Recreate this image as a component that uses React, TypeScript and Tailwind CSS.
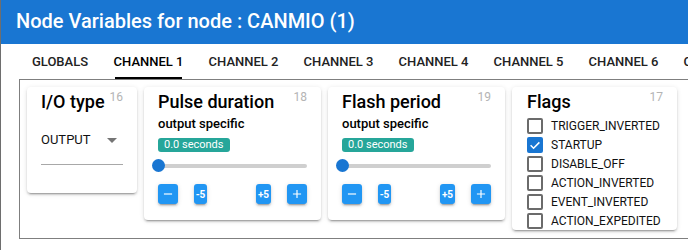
import React from "react";

const tabs = [
  "GLOBALS",
  "CHANNEL 1",
  "CHANNEL 2",
  "CHANNEL 3",
  "CHANNEL 4",
  "CHANNEL 5",
  "CHANNEL 6",
  "CHANNEL 7",
];

const flags = [
  { label: "TRIGGER_INVERTED", checked: false },
  { label: "STARTUP", checked: true },
  { label: "DISABLE_OFF", checked: false },
  { label: "ACTION_INVERTED", checked: false },
  { label: "EVENT_INVERTED", checked: false },
  { label: "ACTION_EXPEDITED", checked: false },
];

const paper =
  "relative bg-white rounded-[4px] shadow-[0_3px_1px_-2px_rgba(0,0,0,0.2),0_2px_2px_0_rgba(0,0,0,0.14),0_1px_5px_0_rgba(0,0,0,0.12)]";

const btn =
  "h-[20px] flex items-center justify-center rounded-[3px] bg-[#2196f3] text-white shadow-[0_3px_1px_-2px_rgba(0,0,0,0.2),0_2px_2px_0_rgba(0,0,0,0.14),0_1px_5px_0_rgba(0,0,0,0.12)]";

function NvIndex({ n }: { n: number }) {
  return (
    <span className="absolute right-[14px] top-[4px] text-[12px] leading-none text-[#b4b4b4]">
      {n}
    </span>
  );
}

function Title({ children }: { children: React.ReactNode }) {
  return (
    <div className="pt-[3px] text-[18px] leading-[24px] font-medium text-black">
      {children}
    </div>
  );
}

function SliderCard({ title, index }: { title: string; index: number }) {
  return (
    <div className={`${paper} w-[177px] px-[14px] pb-[16px]`}>
      <NvIndex n={index} />
      <Title>{title}</Title>
      <div className="text-[13px] leading-[20px] font-medium text-black">
        output specific
      </div>
      <div className="mt-[4px] flex">
        <span className="h-[14px] px-[6px] rounded-[3px] bg-[#26a69a] text-white text-[11px] leading-[14px]">
          0.0 seconds
        </span>
      </div>
      {/* slider */}
      <div className="relative mt-[7px] h-[13px] flex items-center">
        <div className="h-[4px] w-full rounded-full bg-[#cfcfcf]" />
        <div className="absolute left-[-6px] top-0 size-[13px] rounded-full bg-[#1976d2]" />
      </div>
      <div className="mt-[12px] flex justify-between">
        <div className="flex gap-[16px]">
          <button className={`${btn} w-[20px]`}>
            <svg width="14" height="14" viewBox="0 0 24 24" fill="white">
              <path d="M19 13H5v-2h14v2z" />
            </svg>
          </button>
          <button className={`${btn} w-[13px] text-[10px] font-bold`}>-5</button>
        </div>
        <div className="flex gap-[16px]">
          <button className={`${btn} w-[15px] text-[10px] font-bold`}>+5</button>
          <button className={`${btn} w-[20px]`}>
            <svg width="14" height="14" viewBox="0 0 24 24" fill="white">
              <path d="M19 13h-6v6h-2v-6H5v-2h6V5h2v6h6v2z" />
            </svg>
          </button>
        </div>
      </div>
    </div>
  );
}

export default function App() {
  return (
    <div
      className="w-[688px] h-[250px] overflow-hidden flex bg-white"
      style={{ fontFamily: "Roboto, 'Liberation Sans', sans-serif" }}
    >
      <div className="w-px shrink-0 bg-[#6e6e6e]" />
      <div className="flex-1 min-w-0 flex flex-col">
        {/* header */}
        <div className="h-[44px] shrink-0 bg-[#1976d2] px-[15px] pb-[2px] flex items-center">
          <h2 className="text-[20px] leading-[28px] font-medium text-white whitespace-nowrap">
            Node Variables for node : CANMIO (1)
          </h2>
        </div>

        {/* tabs */}
        <div className="h-[35px] shrink-0 pl-[18px] flex whitespace-nowrap">
          {tabs.map((t, i) => (
            <div
              key={t}
              className={`relative shrink-0 h-full flex items-center justify-center text-[13px] font-medium ${
                i === 0 ? "w-[82px]" : "w-[95px]"
              } ${i === 1 ? "text-black" : "text-[#222]"}`}
            >
              {t}
              {i === 1 && (
                <span className="absolute bottom-0 left-[14px] right-[14px] h-[2px] bg-black" />
              )}
            </div>
          ))}
        </div>

        {/* panel */}
        <div className="ml-[18px] w-[700px] h-[160px] shrink-0 border border-[#7f7f7f] p-[7px] flex items-start gap-[7px]">
          {/* I/O type */}
          <div className={`${paper} w-[110px] px-[14px] pb-[28px]`}>
            <NvIndex n={16} />
            <Title>I/O type</Title>
            <div className="mt-[14px] w-[82px] border-b border-[#a8a8a8] pb-[12px]">
              <div className="h-[24px] flex items-center justify-between pr-[6px]">
                <span className="text-[13px] text-[#111]">OUTPUT</span>
                <svg width="10" height="5" viewBox="7 10 10 5" fill="#757575">
                  <path d="M7 10l5 5 5-5z" />
                </svg>
              </div>
            </div>
          </div>

          <SliderCard title="Pulse duration" index={18} />
          <SliderCard title="Flash period" index={19} />

          {/* Flags */}
          <div className={`${paper} w-[165px] pl-[15px] pr-[14px]`}>
            <NvIndex n={17} />
            <Title>Flags</Title>
            <div className="mt-[2px] flex flex-col">
              {flags.map((f) => (
                <label key={f.label} className="h-[19px] flex items-center gap-[8px]">
                  {f.checked ? (
                    <span className="size-[16px] rounded-[2px] bg-[#1976d2] flex items-center justify-center">
                      <svg width="14" height="14" viewBox="0 0 24 24" fill="none" stroke="white" strokeWidth="2.6">
                        <path d="M4.5 12.5l5 5 10-10" />
                      </svg>
                    </span>
                  ) : (
                    <span className="size-[16px] rounded-[2px] border-2 border-[#6b6b6b]" />
                  )}
                  <span className="text-[12px] leading-none text-[#111] whitespace-nowrap">
                    {f.label}
                  </span>
                </label>
              ))}
            </div>
          </div>
        </div>
      </div>
    </div>
  );
}
